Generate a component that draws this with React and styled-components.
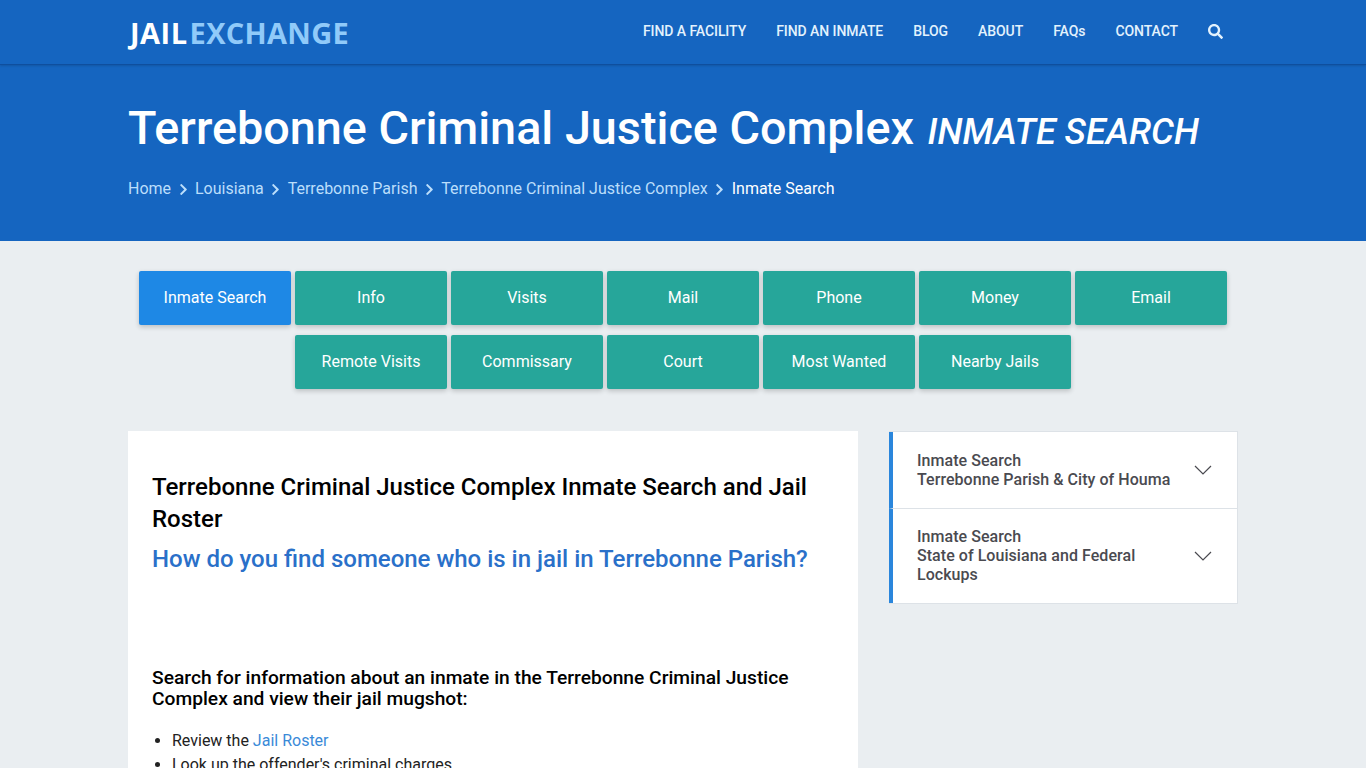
import React from 'react';
import styled, { createGlobalStyle } from 'styled-components';
import { FaSearch, FaChevronRight } from 'react-icons/fa';

const navLinks = ['FIND A FACILITY', 'FIND AN INMATE', 'BLOG', 'ABOUT', 'FAQs', 'CONTACT'];
const crumbs = ['Home', 'Louisiana', 'Terrebonne Parish', 'Terrebonne Criminal Justice Complex'];
const tabRows = [
  ['Inmate Search', 'Info', 'Visits', 'Mail', 'Phone', 'Money', 'Email'],
  ['Remote Visits', 'Commissary', 'Court', 'Most Wanted', 'Nearby Jails'],
];

const App = () => (
  <Page>
    <GlobalStyle />
    <TopBar>
      <Wrap>
        <NavRow>
          <Logo>
            JAIL<LogoAccent>EXCHANGE</LogoAccent>
          </Logo>
          <NavLinks>
            {navLinks.map((link) => (
              <NavLink key={link}>{link}</NavLink>
            ))}
            <SearchButton>
              <FaSearch size={15} />
            </SearchButton>
          </NavLinks>
        </NavRow>
      </Wrap>
    </TopBar>

    <Hero>
      <Wrap>
        <Title>
          Terrebonne Criminal Justice Complex <TitleSub>INMATE SEARCH</TitleSub>
        </Title>
        <Breadcrumbs>
          {crumbs.map((crumb) => (
            <React.Fragment key={crumb}>
              <Crumb>{crumb}</Crumb>
              <CrumbArrow>
                <FaChevronRight size={13} />
              </CrumbArrow>
            </React.Fragment>
          ))}
          <CurrentCrumb>Inmate Search</CurrentCrumb>
        </Breadcrumbs>
      </Wrap>
    </Hero>

    <Wrap>
      <Tabs>
        {tabRows.map((row) => (
          <TabRow key={row[0]}>
            {row.map((tab) => (
              <Tab key={tab} $active={tab === 'Inmate Search'}>
                {tab}
              </Tab>
            ))}
          </TabRow>
        ))}
      </Tabs>

      <Columns>
        <Card>
          <CardTitle>Terrebonne Criminal Justice Complex Inmate Search and Jail Roster</CardTitle>
          <CardQuestion>How do you find someone who is in jail in Terrebonne Parish?</CardQuestion>
          <Lead>
            Search for information about an inmate in the Terrebonne Criminal Justice Complex and
            view their jail mugshot:
          </Lead>
          <BulletList>
            <li>
              Review the <TextLink>Jail Roster</TextLink>
            </li>
            <li>Look up the offender's criminal charges</li>
          </BulletList>
        </Card>

        <Sidebar>
          <SideItem>
            <SideLabel>
              Inmate Search
              <br />
              Terrebonne Parish &amp; City of Houma
            </SideLabel>
            <Chevron />
          </SideItem>
          <SideItem>
            <SideLabel>
              Inmate Search
              <br />
              State of Louisiana and Federal Lockups
            </SideLabel>
            <Chevron />
          </SideItem>
        </Sidebar>
      </Columns>
    </Wrap>
  </Page>
);

const Chevron = () => (
  <ChevronIcon viewBox="0 0 18 10" fill="none" stroke="#4a4a50" strokeWidth="1.2">
    <path d="M1 1l8 8 8-8" />
  </ChevronIcon>
);

const GlobalStyle = createGlobalStyle`
  html, body {
    margin: 0;
    padding: 0;
    height: 768px;
    overflow: hidden;
    background: #eaeef1;
  }
`;

const Page = styled.div`
  height: 768px;
  overflow: hidden;
  font-family: Roboto, sans-serif;
  background: #eaeef1;
`;

const Wrap = styled.div`
  width: 1110px;
  margin: 0 auto;
`;

const TopBar = styled.header`
  height: 64px;
  background: #1565c0;
  border-bottom: 1px solid #0f4f9e;
  box-shadow: 0 1px 2px rgba(0, 0, 0, 0.15);
  position: relative;
`;

const NavRow = styled.div`
  display: flex;
  align-items: center;
  justify-content: space-between;
  height: 64px;
`;

const Logo = styled.div`
  font-family: "Open Sans", sans-serif;
  font-size: 29px;
  font-weight: 700;
  letter-spacing: 0.5px;
  color: #fff;
  margin-top: 1px;
  margin-left: 2px;
`;

const LogoAccent = styled.span`
  margin-left: 2px;
  letter-spacing: 0.3px;
  color: #90caf9;
`;

const NavLinks = styled.nav`
  display: flex;
  align-items: center;
  gap: 30px;
  margin-right: 15px;
  margin-top: -2px;
`;

const NavLink = styled.a`
  font-size: 14px;
  font-weight: 500;
  color: #e3f2fd;
  letter-spacing: -0.07px;
`;

const SearchButton = styled.span`
  display: flex;
  color: #e3f2fd;
`;

const Hero = styled.section`
  height: 176px;
  background: #1565c0;
`;

const Title = styled.h1`
  margin: 0;
  padding-top: 35px;
  font-size: 46.76px;
  line-height: 56px;
  font-weight: 500;
  color: #fff;
  white-space: nowrap;
`;

const TitleSub = styled.small`
  font-size: 36.2px;
  font-style: italic;
  margin-left: 2px;
`;

const Breadcrumbs = styled.div`
  display: flex;
  align-items: center;
  margin-top: 19px;
  font-size: 16px;
  line-height: 20px;
`;

const Crumb = styled.a`
  color: #bbdefb;
`;

const CrumbArrow = styled.span`
  display: flex;
  width: 23.9px;
  justify-content: center;
  color: #bbdefb;
`;

const CurrentCrumb = styled.span`
  color: #fff;
`;

const Tabs = styled.div`
  display: flex;
  flex-direction: column;
  gap: 10px;
  padding-top: 30px;
`;

const TabRow = styled.div`
  display: flex;
  justify-content: center;
  gap: 4px;
`;

const Tab = styled.a`
  display: flex;
  align-items: center;
  justify-content: center;
  box-sizing: border-box;
  width: 152px;
  height: 54px;
  padding-bottom: 2px;
  border-radius: 2px;
  font-size: 16px;
  color: #fff;
  background: ${(p) => (p.$active ? '#1e88e5' : '#26a69a')};
  box-shadow: 0 2px 5px rgba(0, 0, 0, 0.2);
`;

const Columns = styled.div`
  display: flex;
  justify-content: space-between;
  align-items: flex-start;
  margin-top: 42px;
`;

const Card = styled.article`
  width: 730px;
  box-sizing: border-box;
  padding: 40px 24px;
  background: #fff;
`;

const CardTitle = styled.h2`
  margin: 0;
  font-size: 24px;
  line-height: 32px;
  font-weight: 500;
  color: #000;
`;

const CardQuestion = styled.h3`
  margin: 8px 0 0;
  font-size: 24px;
  line-height: 32px;
  font-weight: 500;
  color: #2a70c9;
`;

const Lead = styled.p`
  margin: 92px 0 0;
  font-size: 19.22px;
  line-height: 21px;
  font-weight: 500;
  color: #000;
`;

const BulletList = styled.ul`
  margin: 20px 0 0;
  padding-left: 20px;
  font-size: 16px;
  line-height: 24px;
  color: #222;
`;

const TextLink = styled.a`
  color: #3a8ad8;
`;

const Sidebar = styled.aside`
  width: 349px;
  box-sizing: border-box;
  background: #fff;
  border: 1px solid #dde2e7;
  border-left: 0;
`;

const SideItem = styled.div`
  display: flex;
  align-items: center;
  justify-content: space-between;
  padding: 19px 25px 19px 24px;
  border-left: 4px solid #2a86dc;
  & + & {
    padding-top: 18px;
    border-top: 1px solid #dde2e7;
  }
`;

const SideLabel = styled.div`
  width: 256px;
  font-size: 16px;
  line-height: 19px;
  font-weight: 500;
  letter-spacing: 0.05px;
  color: #4a4a50;
`;

const ChevronIcon = styled.svg`
  width: 18px;
  height: 10px;
  flex: none;
`;

export default App;
